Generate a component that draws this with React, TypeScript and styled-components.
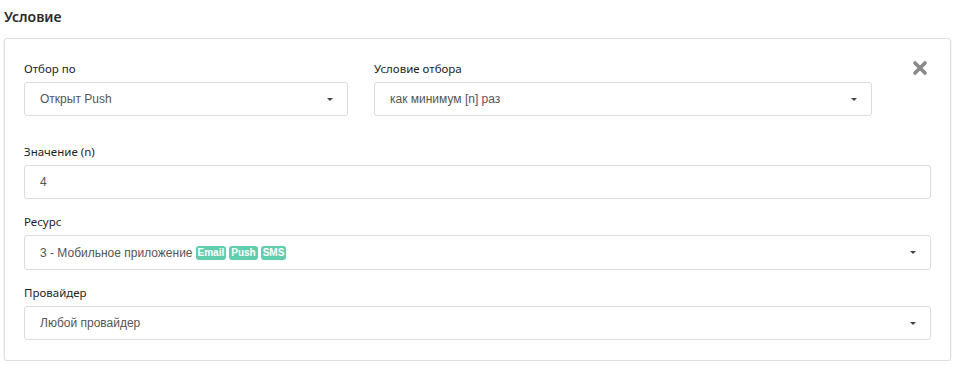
import React from 'react'
import styled, { createGlobalStyle } from 'styled-components';

const GlobalStyle = createGlobalStyle`
    body {
        margin: 0;
        background: #ffffff;
        font-family: "Noto Sans", "Open Sans", sans-serif;
    }
`;

interface IField {
    label: string;
    value: React.ReactNode;
    select?: boolean;
    width?: number;
    tall?: boolean;
}

const Field = ({label, value, select = true, width, tall}: IField) => {
    return (
        <FieldGroup width={width}>
            <Label>{label}</Label>
            <Control tall={tall}>
                <ControlText>{value}</ControlText>
                {select && <Caret />}
            </Control>
        </FieldGroup>
    );
}

const App = () => {
    return (
        <Page>
            <GlobalStyle />
            <Title>Условие</Title>
            <Card>
                <TopRow>
                    <Field label="Отбор по" value="Открыт Push" width={324} />
                    <Field label="Условие отбора" value="как минимум [n] раз" width={498} />
                    <CloseButton aria-label="remove">
                        <svg width="16" height="16" viewBox="0 0 16 16">
                            <path d="M3 3 L13 13 M13 3 L3 13" stroke="#888" strokeWidth="3.6" strokeLinecap="round" />
                        </svg>
                    </CloseButton>
                </TopRow>
                <Field label="Значение (n)" value="4" select={false} />
                <Field
                    label="Ресурс"
                    tall
                    value={
                        <>
                            3 - Мобильное приложение
                            <Badge>Email</Badge>
                            <Badge>Push</Badge>
                            <Badge>SMS</Badge>
                        </>
                    }
                />
                <Field label="Провайдер" value="Любой провайдер" />
            </Card>
        </Page>
    );
}

const Page = styled("div")`
    padding: 0 5px 0 4px;
    width: 947px;
`;

const Title = styled("h3")`
    margin: 0;
    padding: 5px 0 0 0;
    height: 33px;
    font-size: 14px;
    font-weight: 600;
    line-height: 24px;
    color: #2b2b2b;
`;

const Card = styled("div")`
    display: flex;
    flex-direction: column;
    gap: 14px;
    box-sizing: border-box;
    width: 947px;
    padding: 21px 19px 20px 19px;
    border: 1px solid #dedede;
    border-radius: 3px;
    box-shadow: 0 1px 2px rgba(0, 0, 0, 0.12);
`;

const TopRow = styled("div")`
    display: flex;
    gap: 26px;
    margin-bottom: 13px;
    align-items: flex-start;
`;

const FieldGroup = styled("div")<{width?: number}>`
    display: flex;
    flex-direction: column;
    gap: 5px;
    width: ${p => p.width ? `${p.width}px` : "auto"};
    flex: ${p => p.width ? "none" : "1"};
`;

const Label = styled("label")`
    font-size: 11.5px;
    font-weight: 400;
    line-height: 17px;
    color: #1e1e1e;
`;

const Control = styled("div")<{tall?: boolean}>`
    display: flex;
    align-items: center;
    justify-content: space-between;
    box-sizing: border-box;
    height: ${p => p.tall ? "35px" : "34px"};
    padding: 0 14px 0 15px;
    border: 1px solid #dcdcdc;
    border-radius: 3px;
    background: #fff;
`;

const ControlText = styled("span")`
    display: flex;
    align-items: center;
    font-family: "Liberation Sans", Arial, sans-serif;
    font-size: 12px;
    color: #555;
`;

const Caret = styled("span")`
    width: 0;
    height: 0;
    border-left: 3px solid transparent;
    border-right: 3px solid transparent;
    border-top: 3px solid #444;
`;

const Badge = styled("span")`
    margin-left: 3px;
    padding: 1px 2px;
    border-radius: 3px;
    background-color: #62cdad;
    color: #fff;
    font-family: "Liberation Sans", Arial, sans-serif;
    font-size: 10px;
    font-weight: 700;
    line-height: 12px;
`;

const CloseButton = styled("button")`
    margin: 0 3px 0 auto;
    padding: 0;
    border: none;
    background: none;
    cursor: pointer;
    display: flex;
`;

export default App;
